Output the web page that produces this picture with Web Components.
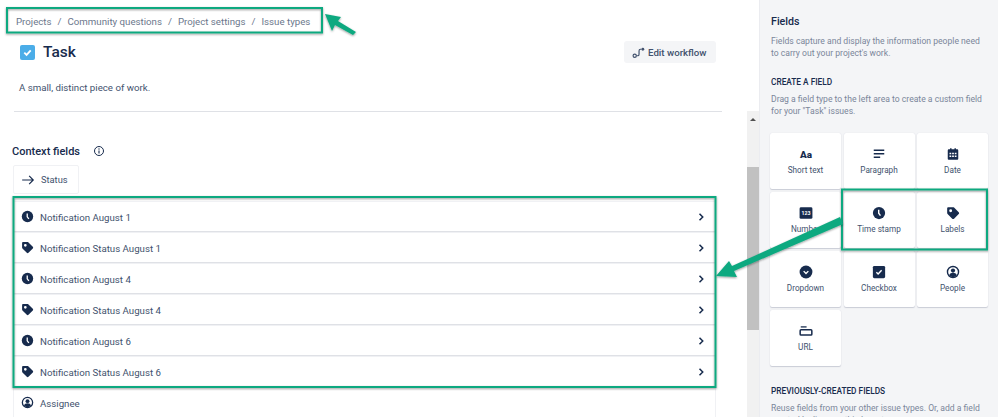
<!DOCTYPE html>
<html>
<head>
<meta charset="utf-8">
<title>Issue types</title>
<style>
  html, body { margin: 0; height: 100%; overflow: hidden; background: #fff; }
  body { font-family: Roboto, "Open Sans", sans-serif; color: #172b4d; }
</style>
</head>
<body>
<issue-page></issue-page>

<script>
const ICONS = {
  clock: '<circle cx="12" cy="12" r="10.500" fill="currentColor"/><path d="M11.500 6.500v6l3 4" fill="none" stroke="#fff" stroke-width="2.400"/>',
  tag: '<path fill="currentColor" fill-rule="evenodd" d="M2 4C2 2.900 2.900 2 4 2h8c.7 0 1.300.3 1.800.7l8 8c.9.9.9 2.200 0 3.100l-8 8c-.9.9-2.200.9-3.100 0l-8-8C2.300 13.300 2 12.700 2 12V4zm6 6.500a2.500 2.500 0 1 0 0-5 2.500 2.500 0 0 0 0 5z"/>',
  person: '<circle cx="12" cy="12" r="9.500" fill="none" stroke="currentColor" stroke-width="2.400"/><circle cx="12" cy="9.500" r="3.600" fill="currentColor"/><path fill="currentColor" d="M5.500 17.500c1-3 3.500-4.200 6.500-4.200s5.500 1.200 6.500 4.200c-1.700 2-4 3-6.500 3s-4.800-1-6.500-3z"/>',
  chevron: '<path d="M9 5.500l6.500 6.500L9 18.500" fill="none" stroke="currentColor" stroke-width="3"/>',
  arrow: '<path d="M2 12h19M14 5l7 7-7 7" fill="none" stroke="currentColor" stroke-width="2"/>',
  info: '<circle cx="12" cy="12" r="9" fill="none" stroke="currentColor" stroke-width="2"/><circle cx="12" cy="8" r="1.300" fill="currentColor"/><path d="M12 11v6" stroke="currentColor" stroke-width="2.200"/>',
  workflow: '<circle cx="5" cy="18" r="3" fill="none" stroke="currentColor" stroke-width="2.200"/><circle cx="20" cy="6" r="2.600" fill="currentColor"/><path d="M8 18h2.500c2 0 2.500-1 2.500-3V9c0-2 .5-3 2.500-3H17" fill="none" stroke="currentColor" stroke-width="2.200"/>',
  text: '<text x="12" y="18" text-anchor="middle" font-family="Roboto, sans-serif" font-weight="900" font-size="17" fill="currentColor">Aa</text>',
  paragraph: '<path d="M3 5.500h18M3 11.500h18M3 17.500h11" stroke="currentColor" stroke-width="2.600" fill="none"/>',
  date: '<path fill="currentColor" fill-rule="evenodd" d="M5 4h2V2h2.500v2h5V2H17v2h2c1.100 0 2 .9 2 2v14c0 1.100-.9 2-2 2H5c-1.100 0-2-.9-2-2V6c0-1.100.9-2 2-2zm1 6v2.500h3V10H6zm4.500 0v2.500h3V10h-3zm4.500 0v2.500h3V10h-3zM6 14.500V17h3v-2.500H6zm4.500 0V17h3v-2.500h-3zm4.500 0V17h3v-2.500h-3z"/>',
  number: '<rect x="1" y="2" width="22" height="20" rx="2.500" fill="currentColor"/><text x="12" y="15.500" text-anchor="middle" font-family="Roboto, sans-serif" font-weight="700" font-size="9" fill="#fff">123</text>',
  dropdown: '<circle cx="12" cy="12" r="11" fill="currentColor"/><path d="M8 10.500l4 4 4-4" fill="none" stroke="#fff" stroke-width="2.400"/>',
  checkbox: '<rect x="1.500" y="1.500" width="21" height="21" rx="2.500" fill="currentColor"/><path d="M7.500 12.500l3 3 6-6.500" fill="none" stroke="#fff" stroke-width="2.400"/>',
  url: '<path d="M3 5h10" stroke="currentColor" stroke-width="2.200"/><rect x="2" y="10" width="20" height="9" rx="1.500" fill="none" stroke="currentColor" stroke-width="2.600"/>'
};

class FieldIcon extends HTMLElement {
  connectedCallback() {
    const size = this.getAttribute('size') || 16;
    this.attachShadow({ mode: 'open' }).innerHTML = `
      <style>:host { display: inline-flex; width: ${size}px; height: ${size}px; color: inherit; } svg { width: 100%; height: 100%; display: block; }</style>
      <svg viewBox="0 0 24 24">${ICONS[this.getAttribute('name')]}</svg>`;
  }
}

const crumbsTpl = document.createElement('template');
crumbsTpl.innerHTML = `
  <style>
    :host { display: flex; gap: 6px; font-size: 9.700px; line-height: 14px; color: #6b778c; padding: 15px 0 0 16px; height: 14px; }
  </style>
  <span>Projects</span><span>/</span><span>Community questions</span><span>/</span><span>Project settings</span><span>/</span><span>Issue types</span>`;
class BreadCrumbs extends HTMLElement {
  constructor() {
    super();
    this.attachShadow({ mode: 'open' }).appendChild(crumbsTpl.content.cloneNode(true));
  }
}

const headTpl = document.createElement('template');
headTpl.innerHTML = `
  <style>
    :host { display: block; padding: 0 31px 0 20px; }
    .top { display: flex; align-items: center; justify-content: space-between; height: 24px; margin-top: 11px; }
    .title { display: flex; align-items: center; gap: 8px; font-size: 15.500px; font-weight: 500; }
    .check { width: 15px; height: 15px; border-radius: 2px; background: #4bade8; display: flex; align-items: center; justify-content: center; }
    .btn { display: flex; align-items: center; gap: 3px; background: #f4f5f7; color: #42526e; font-size: 9.700px; font-weight: 500; white-space: nowrap; height: 22px; width: 92px; box-sizing: border-box; padding: 0 8px; border-radius: 3px; }
    p { margin: 16px 0 0 -1px; font-size: 9.700px; line-height: 16px; color: #42526e; }
    hr { border: 0; height: 1px; background: #dfe1e6; margin: 15px -6px 0 -6px; }
  </style>
  <div class="top">
    <div class="title">
      <span class="check"><svg width="11" height="11" viewBox="0 0 12 12"><path d="M2.500 6.200l2.500 2.500 4.500-5" fill="none" stroke="#fff" stroke-width="2"/></svg></span>
      <span>Task</span>
    </div>
    <div class="btn"><field-icon name="workflow" size="13"></field-icon>Edit workflow</div>
  </div>
  <p>A small, distinct piece of work.</p>
  <hr>`;
class TaskHeader extends HTMLElement {
  constructor() {
    super();
    this.attachShadow({ mode: 'open' }).appendChild(headTpl.content.cloneNode(true));
  }
}

const rowTpl = document.createElement('template');
rowTpl.innerHTML = `
  <style>
    :host { display: flex; align-items: center; height: 29px; background: #fff; border: 1px solid #f0f1f4; border-bottom: 2px solid #dfe1e6; border-radius: 2px; margin-bottom: -1px; font-size: 9.700px; color: #42526e; padding: 0 8px 0 7px; }
    .ic { display: flex; color: #172b4d; margin-right: 6px; }
    .txt { flex: 1; padding-top: 1px; }
    .chev { display: flex; color: #172b4d; }
  </style>
  <span class="ic"></span><span class="txt"><slot></slot></span><span class="chev"></span>`;
class FieldRow extends HTMLElement {
  constructor() {
    super();
    this.attachShadow({ mode: 'open' }).appendChild(rowTpl.content.cloneNode(true));
  }
  connectedCallback() {
    this.shadowRoot.querySelector('.ic').innerHTML = `<field-icon name="${this.getAttribute('icon')}" size="13"></field-icon>`;
    if (!this.hasAttribute('plain')) {
      this.shadowRoot.querySelector('.chev').innerHTML = '<field-icon name="chevron" size="12"></field-icon>';
    }
  }
}

const mainTpl = document.createElement('template');
mainTpl.innerHTML = `
  <style>
    :host { display: block; width: 747px; height: 417px; overflow: hidden; flex: none; }
    .ctx { display: flex; align-items: center; gap: 13px; margin: 31px 0 0 12px; height: 16px; font-size: 11px; font-weight: 500; }
    .status { display: flex; align-items: center; gap: 6px; margin: 6px 0 0 13px; width: 66px; height: 29px; box-sizing: border-box; padding-left: 7px; border: 1px solid #f0f1f4; border-radius: 2px; font-size: 9.300px; color: #42526e; }
    .status field-icon { color: #172b4d; }
    .list { margin: 7px 31px 0 13px; }
  </style>
  <bread-crumbs></bread-crumbs>
  <task-header></task-header>
  <div class="ctx">Context fields <field-icon name="info" size="12"></field-icon></div>
  <div class="status"><field-icon name="arrow" size="14"></field-icon>Status</div>
  <div class="list">
    <field-row icon="clock">Notification August 1</field-row>
    <field-row icon="tag">Notification Status August 1</field-row>
    <field-row icon="clock">Notification August 4</field-row>
    <field-row icon="tag">Notification Status August 4</field-row>
    <field-row icon="clock">Notification August 6</field-row>
    <field-row icon="tag">Notification Status August 6</field-row>
    <field-row icon="person" plain>Assignee</field-row>
  </div>`;
class MainColumn extends HTMLElement {
  constructor() {
    super();
    this.attachShadow({ mode: 'open' }).appendChild(mainTpl.content.cloneNode(true));
  }
}

const barTpl = document.createElement('template');
barTpl.innerHTML = `
  <style>
    :host { display: flex; flex-direction: column; width: 12px; height: 417px; flex: none; }
    .gap { height: 111px; background: #fff; }
    .btn { height: 17px; background: #f1f1f1; display: flex; align-items: center; justify-content: center; }
    .btn i { border: 3px solid transparent; border-top: 0; border-bottom: 3px solid #505050; }
    .a { height: 39px; background: #f1f1f1; }
    .thumb { height: 163px; background: #c1c1c1; }
    .b { flex: 1; background: #f1f1f1; }
  </style>
  <div class="gap"></div><div class="btn"><i></i></div><div class="a"></div><div class="thumb"></div><div class="b"></div>`;
class ScrollBar extends HTMLElement {
  constructor() {
    super();
    this.attachShadow({ mode: 'open' }).appendChild(barTpl.content.cloneNode(true));
  }
}

const cardTpl = document.createElement('template');
cardTpl.innerHTML = `
  <style>
    :host { display: flex; flex-direction: column; align-items: center; height: 56px; box-sizing: border-box; padding-top: 14px; background: #fff; border-radius: 2px; box-shadow: 0 1px 1px #c9ccd6, 0 0 1px #d5d8e0; font-size: 8.200px; line-height: 14px; color: #42526e; }
    .ic { height: 14px; display: flex; color: #172b4d; margin-bottom: 2px; }
  </style>
  <span class="ic"></span><slot></slot>`;
class FieldCard extends HTMLElement {
  constructor() {
    super();
    this.attachShadow({ mode: 'open' }).appendChild(cardTpl.content.cloneNode(true));
  }
  connectedCallback() {
    this.shadowRoot.querySelector('.ic').innerHTML = `<field-icon name="${this.getAttribute('icon')}" size="14"></field-icon>`;
  }
}

const sideTpl = document.createElement('template');
sideTpl.innerHTML = `
  <style>
    :host { display: block; flex: 1; height: 417px; overflow: hidden; box-sizing: border-box; background: #f4f5f7; border-left: 1px solid #ebecf0; padding: 15px 9px 0 11px; }
    h2 { margin: 0; font-size: 10.700px; line-height: 14px; font-weight: 500; }
    h3 { margin: 0; font-size: 8.300px; line-height: 12px; font-weight: 500; text-transform: uppercase; }
    p { margin: 0; font-size: 8.600px; line-height: 12px; color: #7a869a; }
    .grid { display: grid; grid-template-columns: repeat(3, 71px); gap: 3px 2.500px; margin: 16px 0 0 -1px; }
  </style>
  <h2>Fields</h2>
  <p style="margin-top:6px">Fields capture and display the information people need to carry out your project's work.</p>
  <h3 style="margin-top:17px">Create a field</h3>
  <p style="margin-top:5px">Drag a field type to the left area to create a custom field for your "Task" issues.</p>
  <div class="grid">
    <field-card icon="text">Short text</field-card>
    <field-card icon="paragraph">Paragraph</field-card>
    <field-card icon="date">Date</field-card>
    <field-card icon="number">Number</field-card>
    <field-card icon="clock">Time stamp</field-card>
    <field-card icon="tag">Labels</field-card>
    <field-card icon="dropdown">Dropdown</field-card>
    <field-card icon="checkbox">Checkbox</field-card>
    <field-card icon="person">People</field-card>
    <field-card icon="url">URL</field-card>
  </div>
  <h3 style="margin-top:19px">Previously-created fields</h3>
  <p style="margin-top:5px">Reuse fields from your other issue types. Or, add a field created by lines on this layout.</p>`;
class SidePanel extends HTMLElement {
  constructor() {
    super();
    this.attachShadow({ mode: 'open' }).appendChild(sideTpl.content.cloneNode(true));
  }
}

// green annotations drawn on top of the screenshot
const noteTpl = document.createElement('template');
noteTpl.innerHTML = `
  <style>
    :host { position: absolute; left: 0; top: 0; width: 998px; height: 417px; pointer-events: none; }
    svg { display: block; }
  </style>
  <svg width="998" height="417" viewBox="0 0 998 417">
    <defs><filter id="s" x="-20%" y="-20%" width="140%" height="140%"><feDropShadow dx="0" dy="1" stdDeviation="1" flood-color="#000" flood-opacity=".4"/></filter></defs>
    <g filter="url(#s)" fill="none" stroke="#0fa980" stroke-width="2">
      <rect x="7" y="8" width="315" height="24.500"/>
      <rect x="13.500" y="197" width="702" height="190"/>
      <path d="M842 189.500h145v60h-145z"/>
    </g>
    <g filter="url(#s)" fill="#0fa980">
      <path d="M325 14l16 3-3 4 18 11-3 3-18-10-3 6z"/>
      <path d="M716 276l13-15 3 5 108-49 3 7-109 47 3 6z"/>
    </g>
  </svg>`;
class AnnotationLayer extends HTMLElement {
  constructor() {
    super();
    this.attachShadow({ mode: 'open' }).appendChild(noteTpl.content.cloneNode(true));
  }
}

const pageTpl = document.createElement('template');
pageTpl.innerHTML = `
  <style>
    :host { display: flex; position: relative; width: 998px; height: 417px; overflow: hidden; }
  </style>
  <main-column></main-column><scroll-bar></scroll-bar><side-panel></side-panel>
  <annotation-layer></annotation-layer>`;
class IssuePage extends HTMLElement {
  constructor() {
    super();
    this.attachShadow({ mode: 'open' }).appendChild(pageTpl.content.cloneNode(true));
  }
}

customElements.define('field-icon', FieldIcon);
customElements.define('bread-crumbs', BreadCrumbs);
customElements.define('task-header', TaskHeader);
customElements.define('field-row', FieldRow);
customElements.define('main-column', MainColumn);
customElements.define('scroll-bar', ScrollBar);
customElements.define('field-card', FieldCard);
customElements.define('side-panel', SidePanel);
customElements.define('annotation-layer', AnnotationLayer);
customElements.define('issue-page', IssuePage);
</script>
</body>
</html>
